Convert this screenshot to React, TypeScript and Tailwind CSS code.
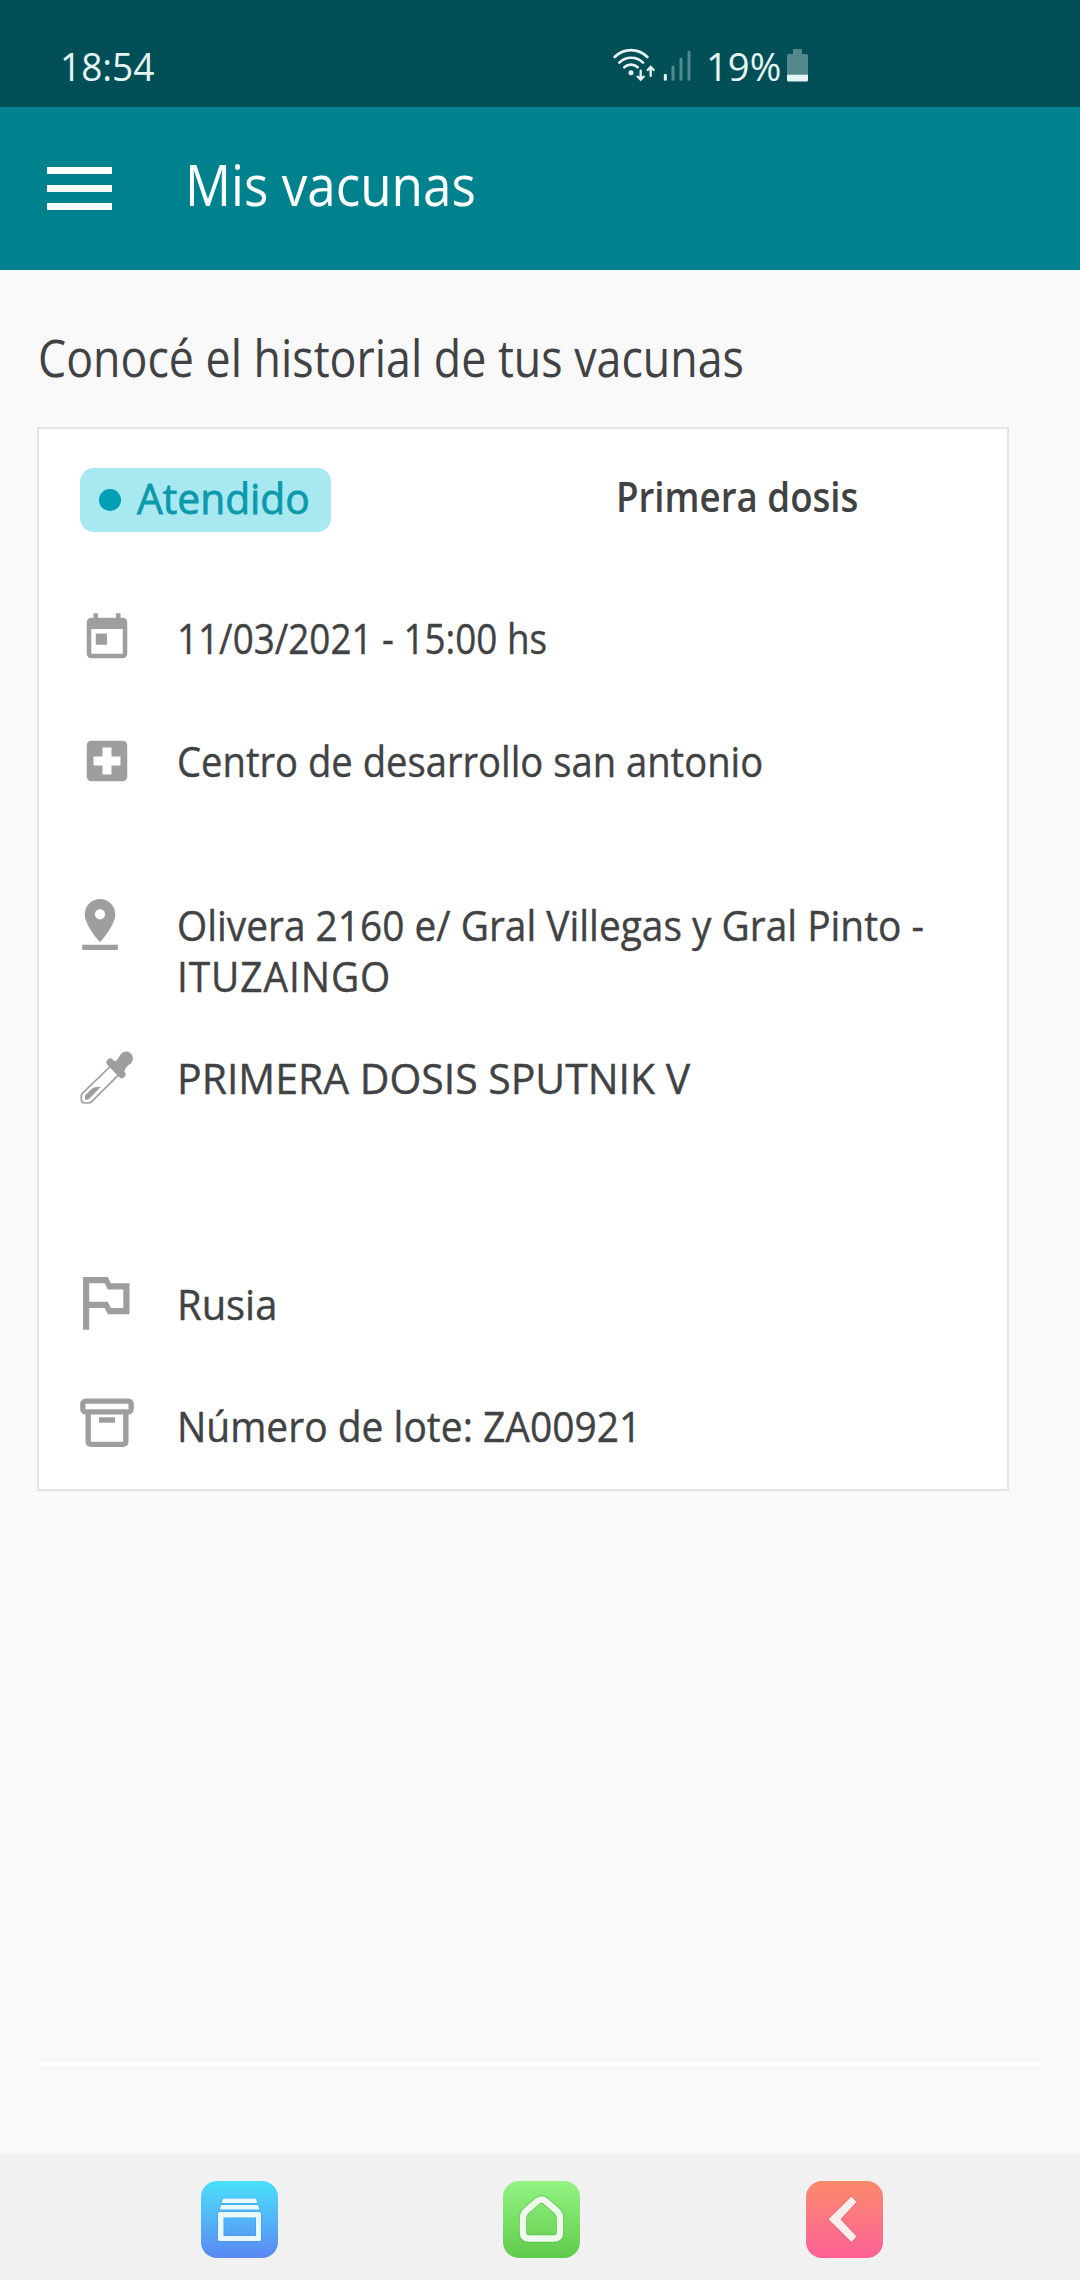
import type { ReactNode } from "react";
import { clsx } from "clsx";

function StatusBar() {
  return (
    <div className="flex h-[107px] items-start bg-[#004f56] pt-10 text-[39px] leading-[52px] text-[#e6f4f4]">
      <span className="ml-[60px] w-[553px] shrink-0">
        <span className="inline-block origin-left scale-x-[0.95]">18:54</span>
      </span>
      {/* Wifi + signal strength */}
      <svg className="mt-[7px] h-[37px] w-20 shrink-0" viewBox="100 50 240 111" fill="none" stroke="currentColor" strokeWidth="8" strokeLinecap="round">
        <path d="M105 80a68 68 0 0 1 98 0M119 97a50 50 0 0 1 71 0M134 111a29 29 0 0 1 40 0" />
        <circle cx="154" cy="127" r="7.5" fill="currentColor" stroke="none" />
        <path d="M183 121v26M174 139l9 9 9-9M213 137v-26M204 119l9-9 9 9" strokeWidth="7" />
        <path d="M257 135v12" strokeWidth="9" />
        <path d="M280 110v37M304 86v61M328 65v82" stroke="#55898d" strokeWidth="9" />
      </svg>
      <span className="ml-[13px] w-[81px] shrink-0">
        <span className="inline-block origin-left scale-x-[0.98]">19%</span>
      </span>
      <svg className="mt-[9px] h-[33px] w-[21px] shrink-0" viewBox="0 0 21 33">
        <path d="M6 0h9v5h4.500q1.500 0 1.500 1.500V26H0V6.500Q0 5 1.500 5H6z" fill="#54888b" />
        <path d="M0 25.700h21v5.300q0 1.500-1.500 1.500h-18Q0 32.500 0 31z" fill="#e6f4f4" />
      </svg>
    </div>
  );
}

function Header() {
  return (
    <header className="flex h-[163px] items-center bg-[#00828e] text-white">
      <button className="ml-[47px] flex w-[65px] flex-col gap-[11px]" aria-label="Menú">
        <span className="h-[7px] w-full bg-white" />
        <span className="h-[7px] w-full bg-white" />
        <span className="h-[7px] w-full bg-white" />
      </button>
      <h1 className="ml-[73px] origin-left scale-x-[0.914] pb-[9px] text-[56px]">Mis vacunas</h1>
    </header>
  );
}

function Row({ icon, height, textTop, children }: { icon: ReactNode; height: string; textTop: string; children: ReactNode }) {
  return (
    <div className={clsx("flex items-start", height)}>
      <div className="w-[97px] shrink-0 text-[#9e9e9e]">{icon}</div>
      <div className={clsx("whitespace-nowrap text-[42px] leading-[51px] [-webkit-text-stroke:0.4px_#414243]", textTop)}>{children}</div>
    </div>
  );
}

const CalendarIcon = () => (
  <svg className="size-[54px]" viewBox="0 0 24 24" fill="currentColor">
    <path d="M19 3h-1V1h-2v2H8V1H6v2H5c-1.110 0-2 .9-2 2v14a2 2 0 0 0 2 2h14c1.100 0 2-.9 2-2V5c0-1.100-.9-2-2-2zm0 16H5V8h14v11zM7 10h5v5H7z" />
  </svg>
);

const HospitalIcon = () => (
  <svg className="size-[54px]" viewBox="0 0 24 24" fill="currentColor">
    <path d="M19 3H5a2 2 0 0 0-2 2v14c0 1.100.9 2 2 2h14c1.100 0 2-.9 2-2V5c0-1.100-.9-2-2-2zm-1 11h-4v4h-4v-4H6v-4h4V6h4v4h4z" />
  </svg>
);

const PinIcon = () => (
  <svg className="h-[61px] w-[54px]" viewBox="4.16 0 21.18 24" fill="currentColor">
    <path d="M18 8c0-3.310-2.690-6-6-6S6 4.690 6 8c0 4.500 6 11 6 11s6-6.500 6-11zm-8 0a2 2 0 1 1 4 0 2 2 0 0 1-4 0zM5 20v2h14v-2z" />
  </svg>
);

const DropperIcon = () => (
  <svg className="h-[54px] w-[55px]" viewBox="60 513 165 162" fill="currentColor">
    <path d="M149 561L67 640q-3 3-3 8v10q0 11 11 11h11q5 0 9-4l79-79" fill="none" stroke="currentColor" strokeWidth="5" />
    <path d="M151 547l34 36" stroke="currentColor" strokeWidth="23" strokeLinecap="round" />
    <path d="M158 547q12-2 20-18c8-16 24-19 34-9s10 26-7 36q-11 8-14 22z" />
    <path d="M75 659v-10q0-4 4-7l15-14q8-7 16-7l13-1-35 36q-3 3-13 3z" />
  </svg>
);

const FlagIcon = () => (
  <svg className="h-[68px] w-[54px]" viewBox="4.03 0.13 17.42 21.94" fill="currentColor">
    <path d="M14 6l-1-2H5v17h2v-7h5l1 2h7V6zm4 8h-4l-1-2H7V6h5l1 2h5z" />
  </svg>
);

const BoxIcon = () => (
  <svg className="h-[50px] w-[55px]" viewBox="60 415 165 150" fill="none" stroke="currentColor" strokeWidth="16">
    <rect x="68.500" y="424.500" width="145" height="32" rx="8" />
    <path d="M84.500 458v87q0 9 9 9h95q9 0 9-9v-87M117 481h48" />
  </svg>
);

function VaccineCard() {
  return (
    <section className="ml-[37px] mt-[35px] h-[1064px] w-[972px] border-2 border-[#e4e4e4] bg-white pl-[41px] pt-[39px]">
      <div className="flex h-[143px] items-start">
        <div className="flex h-16 w-[251px] shrink-0 items-center rounded-[14px] bg-[#a8e9f1] pl-[19px] text-[#0c99ab]">
          <span className="size-[22px] shrink-0 rounded-full bg-[#009fb4]" />
          <span className="ml-4 origin-left scale-x-[0.97] pb-1 text-[42px] leading-[60px] [-webkit-text-stroke:0.8px_#0c99ab]">Atendido</span>
        </div>
        <h2 className="ml-[285px] mt-0.5 origin-left scale-x-[0.873] whitespace-nowrap text-[42px] font-semibold leading-[51px]">
          Primera dosis
        </h2>
      </div>

      <Row icon={<CalendarIcon />} height="h-[123px]" textTop="mt-px">
        <p className="origin-left scale-x-[0.877]">11/03/2021 - 15:00 hs</p>
      </Row>
      <Row icon={<HospitalIcon />} height="h-[160px]" textTop="mt-px">
        <p className="origin-left scale-x-[0.909]">Centro de desarrollo san antonio</p>
      </Row>
      <Row icon={<PinIcon />} height="h-[157px]" textTop="mt-[5px]">
        <p className="origin-left scale-x-[0.925]">
          Olivera 2160 e/ Gral Villegas y Gral Pinto -
          <br />
          <span className="tracking-[1px]">ITUZAINGO</span>
        </p>
      </Row>
      <Row icon={<DropperIcon />} height="h-[214px]" textTop="mt-px">
        <p className="origin-left scale-x-[0.975]">PRIMERA DOSIS SPUTNIK V</p>
      </Row>
      <Row icon={<FlagIcon />} height="h-[133px]" textTop="mt-[13px]">
        <p className="origin-left scale-x-[0.95]">Rusia</p>
      </Row>
      <Row icon={<BoxIcon />} height="h-[52px]" textTop="mt-0.5">
        <p className="origin-left scale-x-[0.928]">Número de lote: ZA00921</p>
      </Row>
    </section>
  );
}

function NavBar() {
  return (
    <nav className="flex h-[126px] items-start bg-[#f1f1f1] pl-[201px] pt-[27px]">
      <button className="size-[77px] rounded-2xl bg-linear-to-b from-[#48e0fc] to-[#5987f2]" aria-label="Recientes">
        <svg className="size-full [paint-order:stroke]" viewBox="0 0 77 77" fill="#e9f8fe" stroke="#2f8fd0" strokeOpacity="0.4" strokeWidth="1.6">
          <path d="M22 17.500h33l1.500 4.500h-36zM20 24h37l1.500 4.500h-40z" />
          <path d="M18.500 31h40q1.500 0 1.500 1.500v26q0 1.500-1.500 1.500h-40q-1.500 0-1.500-1.500v-26q0-1.500 1.500-1.500zM22.500 36.500v18.500H55V36.500z" fillRule="evenodd" />
        </svg>
      </button>
      <button className="ml-[225px] size-[77px] rounded-2xl bg-linear-to-b from-[#93f482] to-[#60cb4a]" aria-label="Inicio">
        <svg className="size-full" viewBox="0 0 77 77" fill="none" strokeLinejoin="round">
          <path d="M20 37q0-4 3-7L34.500 20q4-3 8 0L54 30q3 3 3 7v14.500q0 6-6 6H26q-6 0-6-6z" stroke="#3fae3f" strokeOpacity="0.6" strokeWidth="8" />
          <path d="M20 37q0-4 3-7L34.500 20q4-3 8 0L54 30q3 3 3 7v14.500q0 6-6 6H26q-6 0-6-6z" stroke="#effaec" strokeWidth="6.500" />
        </svg>
      </button>
      <button className="ml-[226px] size-[77px] rounded-2xl bg-linear-to-b from-[#fb8a6a] to-[#fc6095]" aria-label="Volver">
        <svg className="size-full [paint-order:stroke]" viewBox="0 0 77 77" fill="#fdeeee" stroke="#d04a55" strokeOpacity="0.4" strokeWidth="1.6">
          <path d="M22.500 38.300L45.500 15.500l5 5.500-16 17.300 16 17.200-5 5.500z" />
        </svg>
      </button>
    </nav>
  );
}

export default function App() {
  return (
    <div className="flex h-[2280px] w-[1080px] flex-col overflow-hidden bg-[#f9f9f9] font-['Open_Sans','Noto_Sans',sans-serif] text-[#414243]">
      <StatusBar />
      <Header />
      <main className="flex-1">
        <h2 className="ml-[38px] mt-[52px] origin-left scale-x-[0.877] whitespace-nowrap text-[51px] leading-[70px]">
          Conocé el historial de tus vacunas
        </h2>
        <VaccineCard />
        <div className="ml-[37px] mt-[572px] h-0.5 w-[1004px] bg-white" />
      </main>
      <NavBar />
    </div>
  );
}
